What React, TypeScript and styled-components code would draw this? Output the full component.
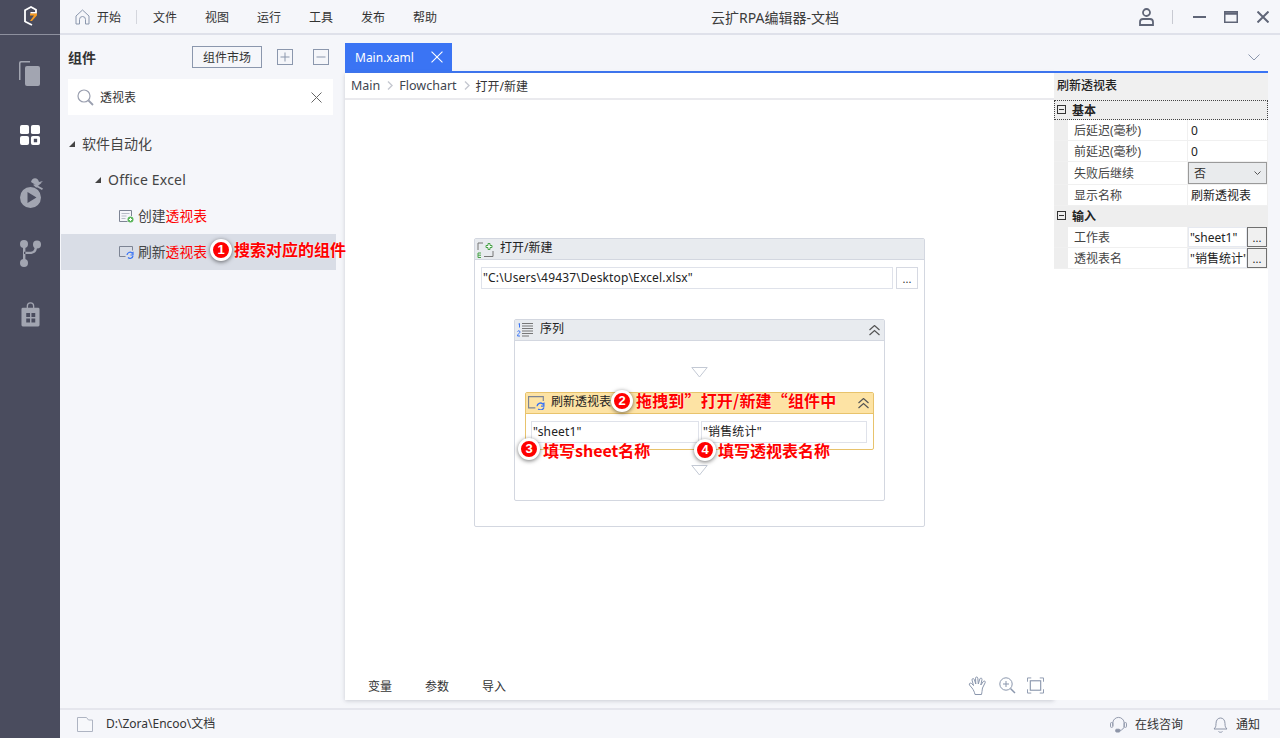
import React from "react";
import styled, { createGlobalStyle } from "styled-components";

const Global = createGlobalStyle`
  html, body { margin: 0; padding: 0; width: 1280px; height: 738px; overflow: hidden; }
  body { font-family: "Noto Sans", "Noto Sans CJK SC", sans-serif; font-size: 12px; color: #333; background: #f5f6fa; }
  * { box-sizing: border-box; }
`;

const Root = styled.div`position: relative; display: flex; width: 1280px; height: 738px; overflow: hidden;`;
const Rail = styled.nav`width: 60px; flex: none; background: #4a4c5e; display: flex; flex-direction: column; align-items: center;`;
const RailLogo = styled.div`width: 100%; height: 35px; flex: none; border-bottom: 1px solid #8e909e; display: flex; align-items: center; justify-content: center; padding-bottom: 2px;`;
const RailItems = styled.div`display: flex; flex-direction: column; align-items: center;`;
const RailItem = styled.span<{ $top: number; $shift?: number }>`display: flex; margin-top: ${(p) => p.$top}px; margin-left: ${(p) => p.$shift ?? 0}px;`;
const Main = styled.div`flex: 1; min-width: 0; display: flex; flex-direction: column;`;
const TopBar = styled.header`height: 35px; flex: none; display: flex; align-items: center; border-bottom: 2px solid #dfe1ea; background: #f5f6fa;`;
const MenuWrap = styled.div`width: 377px; flex: none; display: flex; align-items: center; padding: 1px 0 0 15px;`;
const MenuHome = styled.span`display: flex; align-items: center; gap: 7px; padding-right: 15px; border-right: 1px solid #d4d6dd; height: 14px; margin-right: 16px; color: #333; white-space: nowrap;`;
const MenuItem = styled.span`margin-right: 28px; color: #333; white-space: nowrap;`;
const AppTitle = styled.div`flex: 1; text-align: center; font-size: 14px; color: #3c3c3c; white-space: nowrap;`;
const WinControls = styled.div`width: 167px; flex: none; display: flex; align-items: center; padding-left: 26px; color: #5f6577;`;
const WinSep = styled.span`width: 1px; height: 14px; background: #c8cad2; margin: 0 20px 0 18px;`;
const WinBtn = styled.span<{ $mr: number }>`display: flex; margin-right: ${(p) => p.$mr}px;`;
const Body = styled.div`flex: 1; min-height: 0; display: flex;`;
const Left = styled.aside`width: 285px; flex: none; display: flex; flex-direction: column;`;
const PanelHead = styled.div`height: 44px; flex: none; display: flex; align-items: center; padding: 0 16px 0 8px;`;
const PanelTitle = styled.strong`font-size: 14px; font-weight: 700; color: #333; margin-right: auto; font-family: "Noto Sans CJK SC", sans-serif;`;
const MarketBtn = styled.button`width: 70px; height: 22px; padding: 0; border: 1px solid #8b97ad; background: #f5f6fa; font: inherit; color: #333; margin-right: 15px;`;
const SquareBtn = styled.span<{ $mr: number }>`width: 16px; height: 16px; display: flex; margin-right: ${(p) => p.$mr}px;`;
const Search = styled.div`height: 36px; flex: none; margin: 0 12px 0 8px; background: #fff; display: flex; align-items: center; padding: 0 11px 0 9px;`;
const SearchText = styled.span`flex: 1; margin-left: 6px; color: #333; padding-bottom: 1px;`;
const Tree = styled.div`margin-top: 11px; display: flex; flex-direction: column;`;
const TreeRow = styled.div<{ $indent: number; $selected?: boolean }>`
  height: 36px; display: flex; align-items: center; margin: 0 9px 0 1px; padding-left: ${(p) => p.$indent}px;
  background: ${(p) => (p.$selected ? "#d9dde6" : "transparent")}; color: #444; white-space: nowrap; font-size: 13.8px;
`;
const TreeBig = styled.span<{ $latin?: boolean }>`font-size: 14px; color: #444; padding-bottom: 2px; letter-spacing: ${(p) => (p.$latin ? ".2px" : "0")};`;
const TreeLeaf = styled.span`padding-bottom: 2px;`;
const Arrow = styled.span`width: 0; height: 0; border-style: solid; border-width: 0 0 6px 6px; border-color: transparent transparent #444 transparent; margin-right: 7px;`;
const Hit = styled.span`color: #f00;`;
const RowIcon = styled.span`display: flex; margin-right: 4px;`;
const Center = styled.div`flex: 1; min-width: 0; display: flex; flex-direction: column; padding: 8px 12px 8px 0;`;
const TabRow = styled.div`height: 28px; flex: none; display: flex; align-items: stretch; justify-content: space-between;`;
const Tab = styled.div`width: 107px; background: #3a74f4; color: #fff; font-size: 12px; display: flex; align-items: center; padding: 0 9px 0 10px; justify-content: space-between;`;
const TabChevron = styled.span`display: flex; align-items: center; padding-right: 8px;`;
const Work = styled.div`flex: 1; min-height: 0; display: flex; border-top: 2px solid #3a74f4;`;
const Editor = styled.section`width: 709px; flex: none; background: #fff; display: flex; flex-direction: column; box-shadow: 0 1px 4px rgba(120,125,140,.35);`;
const Crumbs = styled.div`height: 27px; flex: none; border-bottom: 2px solid #eaeaee; display: flex; align-items: center; padding-left: 6px; font-size: 12.5px; color: #40454f;`;
const CrumbSep = styled.span`display: flex; margin: 0 6px 0 7px;`;
const CrumbLast = styled.span`font-size: 12px; color: #333;`;
const Canvas = styled.div`flex: 1; position: relative; min-height: 0;`;
const Card = styled.div`position: absolute; left: 129px; top: 138px; width: 451px; height: 289px; border: 1px solid #d3d7e0; border-radius: 2px; background: #fff;`;
const CardHead = styled.div`height: 21px; background: #e8ebef; border-bottom: 1px solid #d3d7e0; display: flex; align-items: center; gap: 6px; padding: 0 4px 0 2px; color: #222;`;
const PathRow = styled.div`display: flex; gap: 3px; margin: 7px 6px 0 6px;`;
const Field = styled.div<{ $w?: number }>`height: 22px; ${(p) => (p.$w ? `width:${p.$w}px;` : "flex:1;")} border: 1px solid #dfe2ea; display: flex; align-items: center; padding-left: 1px; color: #222; white-space: nowrap; overflow: hidden; letter-spacing: .15px; line-height: 14px;`;
const DotBtn = styled.div`width: 22px; height: 22px; border: 1px solid #d6d9e2; text-align: center; line-height: 22px; color: #333; font-size: 11px;`;
const Seq = styled.div`width: 371px; height: 182px; margin: 30px 0 0 39px; border: 1px solid #d3d7e0; border-radius: 2px; display: flex; flex-direction: column;`;
const SeqBody = styled.div`display: flex; flex-direction: column; align-items: center;`;
const Drop = styled.span<{ $mt: number }>`display: flex; margin-top: ${(p) => p.$mt}px;`;
const Refresh = styled.div`width: 349px; height: 58px; margin-top: 14px; border: 1px solid #e8c36c; border-radius: 2px;`;
const RefreshHead = styled.div`height: 21px; background: #fde3a4; border-bottom: 1px solid #e8c36c; display: flex; align-items: center; padding: 0 4px 0 2px; gap: 6px; color: #222;`;
const HeadLabel = styled.span`flex: 1; padding-bottom: 4px;`;
const FieldRow = styled.div`display: flex; gap: 2px; padding: 7px 6px 0 5px;`;
const EditorFoot = styled.div`height: 30px; flex: none; display: flex; align-items: center; padding: 1px 10px 0 23px; color: #333;`;
const FootTab = styled.span`margin-right: 33px;`;
const FootTools = styled.div`margin-left: auto; display: flex; align-items: center; gap: 11px;`;
const Props = styled.aside`flex: 1; min-width: 0; background: #fff; display: flex; flex-direction: column;`;
const PropsTitle = styled.div`height: 27px; flex: none; background: #f0f0f0; display: flex; align-items: center; padding: 0 0 4px 3px; color: #222; font-weight: 500; font-family: "Noto Sans CJK SC", sans-serif;`;
const Group = styled.div<{ $focus?: boolean; $h: number }>`height: ${(p) => p.$h}px; flex: none; background: #eeeeee; display: flex; align-items: center; padding: 0 0 2px 3px; font-weight: 700; color: #222; font-family: "Noto Sans CJK SC", sans-serif; ${(p) => (p.$focus ? "outline: 1px dotted #444; outline-offset: -1px;" : "")}`;
const ExpandBox = styled.span`width: 9px; height: 9px; border: 1px solid #333; position: relative; flex: none; margin-right: 6px; &::after { content: ""; position: absolute; left: 1px; right: 1px; top: 3px; height: 1px; background: #333; }`;
const PropRow = styled.div<{ $h?: number }>`height: ${(p) => p.$h ?? 21}px; flex: none; display: grid; grid-template-columns: 14px 120px 1fr; background: #f0f0f0; padding-bottom: 1px;`;
const PropName = styled.div`background: #fff; padding-left: 6px; display: flex; align-items: center; color: #444; white-space: nowrap; margin-right: 1px;`;
const PropVal = styled.div<{ $plain?: boolean }>`background: #fff; padding-left: ${(p) => (p.$plain ? 3 : 0)}px; display: flex; align-items: center; color: #222; white-space: nowrap; overflow: hidden; margin-right: 1px; min-width: 0;`;
const PropSelect = styled.div`width: 79px; height: 100%; background: #e9ebed; border: 1px solid #9a9a9a; display: flex; align-items: center; justify-content: space-between; padding: 0 5px 0 5px; color: #333;`;
const ValText = styled.span`flex: 1; min-width: 0; height: 100%; overflow: hidden; display: flex; align-items: center; padding-left: 1px; border: 1px solid #e6e9f0;`;
const PropDots = styled.span`width: 20px; height: 20px; flex: none; border: 1px solid #6f6f6f; background: #f0f0f0; text-align: center; line-height: 20px; font-size: 11px;`;
const PropIndent = styled.span`background: #eeeeee;`;
const Status = styled.footer`height: 30px; flex: none; border-top: 2px solid #e5e6ed; display: flex; align-items: center; padding: 0 20px 0 17px; color: #333; background: #f5f6fa;`;
const StatusPath = styled.span`margin-left: 13px; margin-right: auto; padding-bottom: 2px;`;
const StatusItem = styled.span`display: flex; align-items: center; gap: 8px; margin-left: 30px;`;

const Badge = styled.span<{ $x: number; $y: number }>`
  position: absolute; left: ${(p) => p.$x}px; top: ${(p) => p.$y}px; width: 22px; height: 22px; border-radius: 50%;
  background: #f00; border: 3px solid #fff; box-shadow: 0 1px 4px rgba(0,0,0,.55); color: #fff; font: 700 13px/16px "Liberation Sans", sans-serif; text-align: center;
`;
const Note = styled.span<{ $x: number; $y: number; $ls?: number }>`
  position: absolute; left: ${(p) => p.$x}px; top: ${(p) => p.$y}px; color: #f00; font: 700 16px/18px "Noto Sans CJK SC", sans-serif; white-space: nowrap; text-shadow: 0 0 2px #fff; letter-spacing: ${(p) => p.$ls ?? 0}px;
`;

const Plain = styled.svg`display: block; flex: none;`;

const Logo = () => (
  <Plain width="13" height="20" viewBox="0 0 13 20">
    <path d="M1 16V4.200L7 1l5 2.800v3H6.500" fill="none" stroke="#fff" strokeWidth="1.800" />
    <path d="M1 15.500 8 19" fill="none" stroke="#fff" strokeWidth="1.800" />
    <path d="M6 7.500h7v1.800L8 15H6l4-5.500H6z" fill="#f59a23" />
  </Plain>
);
const Copy = () => (
  <Plain width="22" height="26" viewBox="0 0 22 26" fill="#a2a5b1">
    <path d="M1 20V3a2 2 0 0 1 2-2h9v1.600H3.500a1 1 0 0 0-1 1V20z" />
    <rect x="7" y="6" width="15" height="20" rx="2" />
  </Plain>
);
const Grid = () => (
  <Plain width="20" height="20" viewBox="0 0 21 21" fill="#fff">
    <rect width="9.500" height="9.500" rx="2" />
    <rect x="11.500" width="9.500" height="9.500" rx="2" />
    <rect y="11.500" width="9.500" height="9.500" rx="2" />
    <path fillRule="evenodd" d="M13.500 11.500h5.500a2 2 0 0 1 2 2V19a2 2 0 0 1-2 2h-5.500a2 2 0 0 1-2-2v-5.500a2 2 0 0 1 2-2zm1 3v3.500h3.500v-3.500z" />
  </Plain>
);
const Bot = () => (
  <Plain width="24" height="30" viewBox="0 0 24 30" fill="#a2a5b1">
    <path d="M11 4c.5-2.500 2-3.800 4-3.800s3.500 1.300 4 3.800l4-1-3.500 3-1 1.300-4-1z" />
    <path d="M13 6.800 22 4.500l-4 3.200 5 2.800-1 1.500-4.500-2.500L16 9.500z" />
    <path fillRule="evenodd" d="M10.500 9a10.500 10.500 0 1 1 0 21 10.500 10.500 0 0 1 0-21zM7.500 14v11l9-5.500z" />
  </Plain>
);
const Branch = () => (
  <Plain width="21" height="27" viewBox="0 0 21 27" fill="#a2a5b1">
    <circle cx="4" cy="4" r="4" />
    <circle cx="17" cy="4.500" r="4" />
    <circle cx="4" cy="23" r="4" />
    <path d="M3 4h2.400v18H3zM4 14h6c4 0 7-2 7-7h-2.400c0 3.500-2 4.700-4.600 4.700H4z" />
  </Plain>
);
const Shop = () => (
  <Plain width="19" height="25" viewBox="0 0 20 26" fill="#a2a5b1">
    <path d="M6 6.500V4a4 4 0 0 1 8 0v2.500h-1.400V4a2.600 2.600 0 0 0-5.200 0v2.500z" />
    <path fillRule="evenodd" d="M2 6h16a1.500 1.500 0 0 1 1.500 1.500V24a1.500 1.500 0 0 1-1.500 1.500H2A1.500 1.500 0 0 1 .5 24V7.500A1.500 1.500 0 0 1 2 6zm3.500 5.500v4.200h4v-4.200zm5.500 0v4.200h4v-4.200zM5.500 17.200v4.200h4v-4.200zm5.500 0v4.200h4v-4.200z" />
  </Plain>
);
const Home = () => (
  <Plain width="15" height="16" viewBox="0 0 15 16" fill="none" stroke="#8b97ad">
    <path d="M1 7 7.500 1 14 7v8h-3.500v-4.500a3 3 0 0 0-6 0V15H1z" />
  </Plain>
);
const Box = ({ plus }: { plus?: boolean }) => (
  <Plain width="16" height="16" viewBox="0 0 16 16" fill="none" stroke="#8b97ad">
    <rect x=".5" y=".5" width="15" height="15" />
    <path d={plus ? "M3.500 8h9M8 3.500v9" : "M3.500 8h9"} />
  </Plain>
);
const Magnifier = () => (
  <Plain width="17" height="17" viewBox="0 0 17 17" fill="none" stroke="#9a9faf" strokeWidth="1.200">
    <circle cx="7" cy="7" r="6" />
    <path d="m11.500 11.500 4.500 4.500" strokeWidth="1.800" />
  </Plain>
);
const Cross = ({ color = "#666", size = 11, weight = 1 }: { color?: string; size?: number; weight?: number }) => (
  <Plain width={size} height={size} viewBox="0 0 11 11" fill="none" stroke={color} strokeWidth={weight}>
    <path d="m.5.5 10 10M10.500.5l-10 10" />
  </Plain>
);
const Chevron = () => (
  <Plain width="12" height="7" viewBox="0 0 12 7" fill="none" stroke="#8b97ad">
    <path d="m.5.5 5.500 5.500L11.500.5" />
  </Plain>
);
const CrumbArrow = () => (
  <Plain width="6" height="9" viewBox="0 0 6 9" fill="none" stroke="#c5c8d0" strokeWidth="1.400">
    <path d="m1 .5 4 4-4 4" />
  </Plain>
);
const CreateIcon = () => (
  <Plain width="15" height="13" viewBox="0 0 15 13" fill="none">
    <path d="M12.500 6V.5H.5v11h8" stroke="#7d8494" />
    <path d="M2.500 3.500h8M2.500 6h5M2.500 8.500h4" stroke="#b7bcc7" />
    <circle cx="11.500" cy="9.500" r="3" fill="#5cb65c" />
    <path d="M10 9.500h3M11.500 8v3" stroke="#fff" />
  </Plain>
);
const RefreshIcon = ({ w = 15 }: { w?: number }) => (
  <Plain width={w} height={(w * 13) / 15} viewBox="0 0 15 13" fill="none">
    <path d="M13.500 4.500v-4H.5v10h6" stroke="#7d8494" />
    <path d="M8 9a3 3 0 0 1 5-2l1-.5v2.500h-2.500M14 10a3 3 0 0 1-5 1.500" stroke="#3a74f4" strokeWidth="1.200" />
  </Plain>
);
const OpenIcon = () => (
  <Plain width="17" height="17" viewBox="0 0 17 17" fill="none">
    <path d="M1 9V2h5M16 10v5.500H7" stroke="#777" />
    <path d="M9 4.500h2v-2h2v2h2v2h-2v2h-2v-2H9z" stroke="#48a348" fill="#fff" />
    <path d="M4 12H1v4.500h3M1 14.200h3" stroke="#48a348" />
  </Plain>
);
const SeqIcon = () => (
  <Plain width="17" height="14" viewBox="0 0 17 14" fill="none">
    <path d="M5 .5h11M5 3h11M5 5.500h11M5 8h11M5 10.500h11M5 13h7" stroke="#777" />
    <path d="M1.500 1 2.500.5v4M.5 8.500c.5-1 2.500-1 2.500.5 0 1-2.500 2-2.500 4H3" stroke="#3a74f4" />
  </Plain>
);
const Collapse = () => (
  <Plain width="11" height="11" viewBox="0 0 11 11" fill="none" stroke="#555" strokeWidth="1.200">
    <path d="m.5 5 5-4.500 5 4.500M.5 10l5-4.500 5 4.500" />
  </Plain>
);
const DropMark = () => (
  <Plain width="17" height="11" viewBox="0 0 17 11" fill="#fff" stroke="#c3c9d4">
    <path d="M.8.5h15.400L8.500 10z" />
  </Plain>
);
const Hand = () => (
  <Plain width="20" height="20" viewBox="0 0 20 20" fill="none" stroke="#8b97ad">
    <path d="M4 12 1.500 9c-1-1.500 1-2.500 2-1.500L5.500 9.500 4 4c-.3-1.500 1.800-2 2.300-.5L7.800 8 7.500 2.200c0-1.600 2.200-1.600 2.300 0L10.300 8l1.500-5c.5-1.500 2.500-1 2.200.5L12.800 9l2.500-3.500c1-1.200 2.700 0 1.800 1.300L14.500 12c-.5 3-.5 4-1 6.500H7C6.500 16 5.500 14 4 12z" />
  </Plain>
);
const ZoomIn = () => (
  <Plain width="17" height="17" viewBox="0 0 17 17" fill="none" stroke="#8b97ad">
    <circle cx="7" cy="7" r="6.200" />
    <path d="M4 7h6M7 4v6" />
    <path d="m11.500 11.500 4.500 4.500" strokeWidth="1.500" />
  </Plain>
);
const Fit = () => (
  <Plain width="17" height="17" viewBox="0 0 18 17" fill="none" stroke="#8b97ad">
    <path d="M.5 4.500v-4h4M13.500.5h4v4M17.500 12.500v4h-4M4.500 16.500h-4v-4" />
    <rect x="3.500" y="3.500" width="11" height="10" strokeWidth="1.200" />
  </Plain>
);
const Folder = () => (
  <Plain width="16" height="15" viewBox="0 0 16 15" fill="#f7f8fb" stroke="#aeb4c2">
    <path d="M.5.5h9l2 2.500h4v11.500H.5z" />
  </Plain>
);
const Headset = () => (
  <Plain width="17" height="17" viewBox="0 0 18 17" fill="none" stroke="#8d95a8">
    <path d="M3 10V7a6 6 0 0 1 12 0v3c0 2.500-2 4.500-5 5" />
    <rect x=".5" y="6.500" width="2.500" height="5" rx="1" />
    <rect x="15" y="6.500" width="2.500" height="5" rx="1" />
    <rect x="6" y="13.500" width="4.500" height="3" rx="1" fill="#8d95a8" />
  </Plain>
);
const Bell = () => (
  <Plain width="15" height="17" viewBox="0 0 15 17" fill="none" stroke="#8d95a8">
    <path d="M1 13c1.500-1.500 2-2.500 2-5.500 0-3.500 2-5.500 4.500-5.500S12 4 12 7.500c0 3 .5 4 2 5.500zM5.500 15.500c1 1 3 1 4 0" />
  </Plain>
);
const User = () => (
  <Plain width="15" height="18" viewBox="0 0 15 18" fill="none" stroke="#5f6577" strokeWidth="1.800">
    <circle cx="7.500" cy="4.500" r="3.500" />
    <path d="M1 17v-3c0-2 1.500-3 3-3h7c1.500 0 3 1 3 3v3z" />
  </Plain>
);
const Maximize = () => (
  <Plain width="14" height="12" viewBox="0 0 14 12" fill="none" stroke="#5f6577">
    <rect x=".75" y=".75" width="12.500" height="10.500" strokeWidth="1.500" />
    <path d="M0 2.500h14" strokeWidth="2.500" />
  </Plain>
);
const Minimize = () => (
  <Plain width="13" height="2" viewBox="0 0 13 2"><rect width="13" height="2" fill="#5f6577" /></Plain>
);
const SelectCaret = () => (
  <Plain width="7" height="5" viewBox="0 0 7 5" fill="none" stroke="#555"><path d="m.5.5 3 3 3-3" /></Plain>
);

const menus = ["文件", "视图", "运行", "工具", "发布", "帮助"];

export default function App() {
  return (
    <Root>
      <Global />
      <Rail>
        <RailLogo><Logo /></RailLogo>
        <RailItems>
          <RailItem $top={25} $shift={-3}><Copy /></RailItem>
          <RailItem $top={39}><Grid /></RailItem>
          <RailItem $top={33} $shift={3}><Bot /></RailItem>
          <RailItem $top={32} $shift={1}><Branch /></RailItem>
          <RailItem $top={35}><Shop /></RailItem>
        </RailItems>
      </Rail>
      <Main>
        <TopBar>
          <MenuWrap>
            <MenuHome><Home />开始</MenuHome>
            {menus.map((m) => <MenuItem key={m}>{m}</MenuItem>)}
          </MenuWrap>
          <AppTitle>云扩RPA编辑器-文档</AppTitle>
          <WinControls>
            <User />
            <WinSep />
            <WinBtn $mr={18}><Minimize /></WinBtn>
            <WinBtn $mr={19}><Maximize /></WinBtn>
            <WinBtn $mr={0}><Cross color="#5f6577" size={12} weight={1.800} /></WinBtn>
          </WinControls>
        </TopBar>
        <Body>
          <Left>
            <PanelHead>
              <PanelTitle>组件</PanelTitle>
              <MarketBtn>组件市场</MarketBtn>
              <SquareBtn $mr={20}><Box plus /></SquareBtn>
              <SquareBtn $mr={0}><Box /></SquareBtn>
            </PanelHead>
            <Search>
              <Magnifier />
              <SearchText>透视表</SearchText>
              <Cross />
            </Search>
            <Tree>
              <TreeRow $indent={8}><Arrow /><TreeBig>软件自动化</TreeBig></TreeRow>
              <TreeRow $indent={34}><Arrow /><TreeBig $latin>Office Excel</TreeBig></TreeRow>
              <TreeRow $indent={58}><RowIcon><CreateIcon /></RowIcon><TreeLeaf>创建<Hit>透视表</Hit></TreeLeaf></TreeRow>
              <TreeRow $indent={58} $selected><RowIcon><RefreshIcon /></RowIcon><TreeLeaf>刷新<Hit>透视表</Hit></TreeLeaf></TreeRow>
            </Tree>
          </Left>
          <Center>
            <TabRow>
              <Tab>Main.xaml<Cross color="#fff" size={12} /></Tab>
              <TabChevron><Chevron /></TabChevron>
            </TabRow>
            <Work>
              <Editor>
                <Crumbs>
                  Main<CrumbSep><CrumbArrow /></CrumbSep>Flowchart<CrumbSep><CrumbArrow /></CrumbSep><CrumbLast>打开/新建</CrumbLast>
                </Crumbs>
                <Canvas>
                  <Card>
                    <CardHead><OpenIcon /><HeadLabel>打开/新建</HeadLabel></CardHead>
                    <PathRow>
                      <Field>"C:\Users\49437\Desktop\Excel.xlsx"</Field>
                      <DotBtn>...</DotBtn>
                    </PathRow>
                    <Seq>
                      <CardHead><SeqIcon /><HeadLabel>序列</HeadLabel><Collapse /></CardHead>
                      <SeqBody>
                        <Drop $mt={26}><DropMark /></Drop>
                        <Refresh>
                          <RefreshHead><RefreshIcon w={17} /><HeadLabel>刷新透视表</HeadLabel><Collapse /></RefreshHead>
                          <FieldRow>
                            <Field $w={168}>"sheet1"</Field>
                            <Field $w={166}>"销售统计"</Field>
                          </FieldRow>
                        </Refresh>
                        <Drop $mt={15}><DropMark /></Drop>
                      </SeqBody>
                    </Seq>
                  </Card>
                </Canvas>
                <EditorFoot>
                  <FootTab>变量</FootTab>
                  <FootTab>参数</FootTab>
                  <FootTab>导入</FootTab>
                  <FootTools><Hand /><ZoomIn /><Fit /></FootTools>
                </EditorFoot>
              </Editor>
              <Props>
                <PropsTitle>刷新透视表</PropsTitle>
                <Group $focus $h={20}><ExpandBox />基本</Group>
                <PropRow><PropIndent /><PropName>后延迟(毫秒)</PropName><PropVal $plain>0</PropVal></PropRow>
                <PropRow><PropIndent /><PropName>前延迟(毫秒)</PropName><PropVal $plain>0</PropVal></PropRow>
                <PropRow $h={23}><PropIndent /><PropName>失败后继续</PropName><PropVal><PropSelect>否<SelectCaret /></PropSelect></PropVal></PropRow>
                <PropRow><PropIndent /><PropName>显示名称</PropName><PropVal $plain>刷新透视表</PropVal></PropRow>
                <Group $h={21}><ExpandBox />输入</Group>
                <PropRow><PropIndent /><PropName>工作表</PropName><PropVal><ValText>"sheet1"</ValText><PropDots>...</PropDots></PropVal></PropRow>
                <PropRow><PropIndent /><PropName>透视表名</PropName><PropVal><ValText>"销售统计"</ValText><PropDots>...</PropDots></PropVal></PropRow>
              </Props>
            </Work>
          </Center>
        </Body>
        <Status>
          <Folder />
          <StatusPath>D:\Zora\Encoo\文档</StatusPath>
          <StatusItem><Headset />在线咨询</StatusItem>
          <StatusItem><Bell />通知</StatusItem>
        </Status>
      </Main>
      <Badge $x={210} $y={239}>1</Badge>
      <Note $x={234} $y={240}>搜索对应的组件</Note>
      <Badge $x={611} $y={390}>2</Badge>
      <Note $x={636} $y={391} $ls={0.17}>拖拽到”打开/新建“组件中</Note>
      <Badge $x={518} $y={438}>3</Badge>
      <Note $x={543} $y={441}>填写sheet名称</Note>
      <Badge $x={694} $y={439}>4</Badge>
      <Note $x={718} $y={441}>填写透视表名称</Note>
    </Root>
  );
}
